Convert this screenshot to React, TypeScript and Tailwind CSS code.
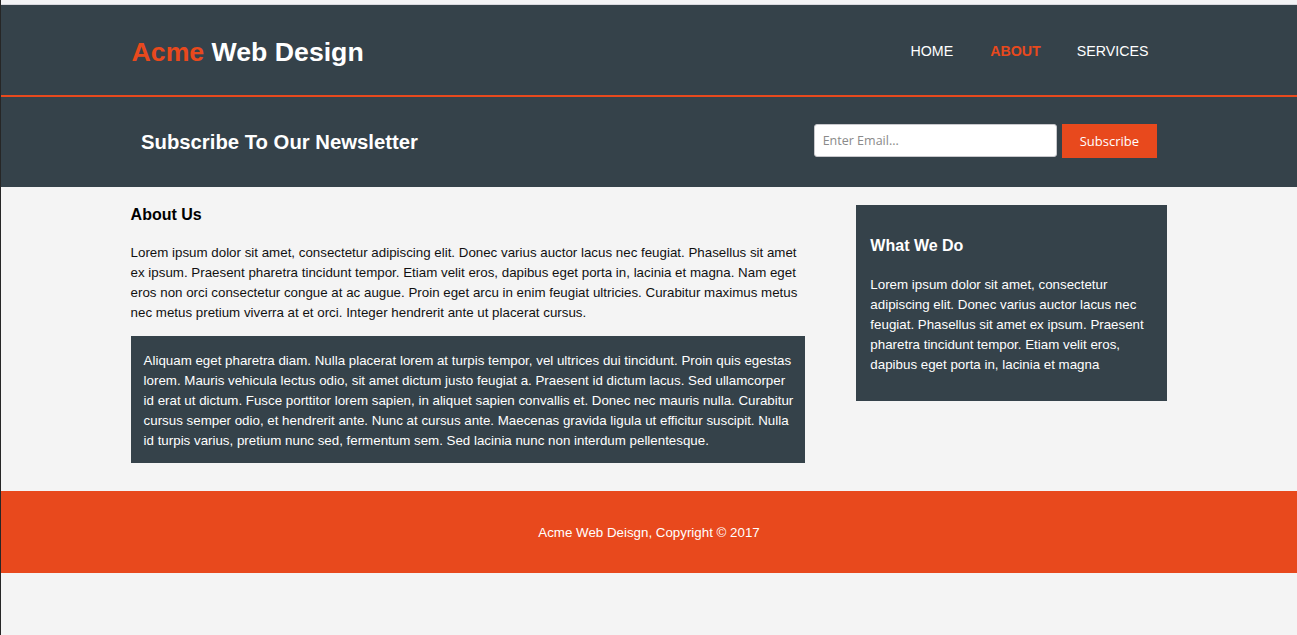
import React from "react"

const navLinks = [
  { label: "Home", current: false },
  { label: "About", current: true },
  { label: "Services", current: false },
]

// lines of the dark box, broken where the original page breaks them
const darkLines = [
  "Aliquam eget pharetra diam. Nulla placerat lorem at turpis tempor, vel ultrices dui tincidunt. Proin quis egestas",
  "lorem. Mauris vehicula lectus odio, sit amet dictum justo feugiat a. Praesent id dictum lacus. Sed ullamcorper",
  "id erat ut dictum. Fusce porttitor lorem sapien, in aliquet sapien convallis et. Donec nec mauris nulla. Curabitur",
  "cursus semper odio, et hendrerit ante. Nunc at cursus ante. Maecenas gravida ligula ut efficitur suscipit. Nulla",
  "id turpis varius, pretium nunc sed, fermentum sem. Sed lacinia nunc non interdum pellentesque.",
]

const App = () => {
  return (
    <div className="min-h-[635px] bg-[#f4f4f4] border-l border-[#262626] font-['Liberation_Sans',Arial,sans-serif] text-[13.33px] leading-[20px] text-[#111]">
      <div className="h-[5px] bg-[#f3f3f5] border-b border-[#d8d8de]" />

      <header className="bg-[#35424a] text-white border-b-2 border-[#e8491d]">
        <div className="w-[80%] mx-auto h-[90px] flex items-center justify-between">
          <h1 className="pt-[4px] text-[26.67px] font-bold leading-[32px] pl-px">
            <span className="text-[#e8491d]">Acme</span> Web Design
          </h1>
          <nav className="pt-[2px]">
            <ul className="flex">
              {navLinks.map((link) => (
                <li key={link.label} className="px-[18px] first:pr-[19px] last:pr-[19px]">
                  <a
                    href="#"
                    className={
                      link.current
                        ? "uppercase text-[14.22px] font-bold text-[#e8491d]"
                        : "uppercase text-[14.22px] text-white"
                    }
                  >
                    {link.label}
                  </a>
                </li>
              ))}
            </ul>
          </nav>
        </div>
      </header>

      <section className="bg-[#35424a] text-white px-[13px]">
        <div className="w-[80%] mx-auto h-[90px] flex items-center justify-between">
          <h1 className="text-[20.3px] font-bold leading-[28px]">Subscribe To Our Newsletter</h1>
          <form className="flex items-center pb-[3px]" onSubmit={(e) => e.preventDefault()}>
            <input
              type="email"
              placeholder="Enter Email..."
              className="w-[243px] h-[33px] rounded-[3px] border border-[#c8c8cc] bg-white px-[8px] text-[12.5px] text-[#333] placeholder:text-[#8a8a8a] font-['Open_Sans',sans-serif] outline-none"
            />
            <button
              type="submit"
              className="ml-[5px] h-[34px] px-[18px] bg-[#e8491d] text-white text-[13px] font-['Open_Sans',sans-serif]"
            >
              Subscribe
            </button>
          </form>
        </div>
      </section>

      <div className="w-[80%] mx-auto flex justify-between">
        <article className="w-[65%] pt-[16px]">
          <h1 className="text-[16px] font-bold leading-[24px] text-black">About Us</h1>
          <p className="mt-[16px]">
            Lorem ipsum dolor sit amet, consectetur adipiscing elit. Donec varius auctor lacus nec feugiat.
            Phasellus sit amet ex ipsum. Praesent pharetra tincidunt tempor. Etiam velit eros, dapibus eget porta
            in, lacinia et magna. Nam eget eros non orci consectetur congue at ac augue. Proin eget arcu in enim
            feugiat ultricies. Curabitur maximus metus nec metus pretium viverra at et orci. Integer hendrerit
            ante ut placerat cursus.
          </p>
          <p className="mt-[13px] bg-[#35424a] text-white pl-[13px] pr-[4px] pt-[15px] pb-[12px]">
            {darkLines.map((line, i) => (
              <span key={i} className="block whitespace-nowrap">
                {line}
              </span>
            ))}
          </p>
        </article>

        <aside className="w-[30%] mt-[18px]">
          <div className="bg-[#35424a] text-white px-[14px] pt-[29px] pb-[26px]">
            <h3 className="text-[16px] font-bold leading-[24px]">What We Do</h3>
            <p className="mt-[17px]">
              Lorem ipsum dolor sit amet, consectetur adipiscing elit. Donec varius auctor lacus nec feugiat.
              Phasellus sit amet ex ipsum. Praesent pharetra tincidunt tempor. Etiam velit eros, dapibus eget
              porta in, lacinia et magna
            </p>
          </div>
        </aside>
      </div>

      <footer className="mt-[28px] h-[82px] bg-[#e8491d] text-white flex items-center justify-center">
        <p className="pt-[1px]">Acme Web Deisgn, Copyright &copy; 2017</p>
      </footer>
    </div>
  )
}

export default App
